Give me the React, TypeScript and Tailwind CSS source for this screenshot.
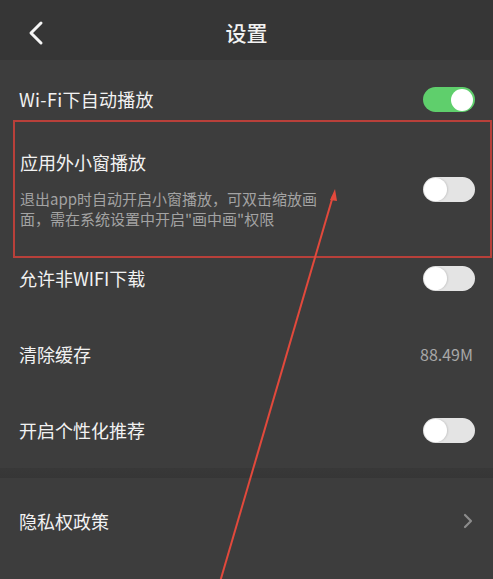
import React from "react";

function Toggle({ on }: { on: boolean }) {
  return on ? (
    <div className="w-[52px] h-[25px] rounded-full bg-[#5fcf6c] flex items-center justify-end pr-[2px]">
      <div className="w-[22px] h-[22px] rounded-full bg-white" />
    </div>
  ) : (
    <div className="w-[52px] h-[25px] rounded-full bg-[#e4e4e4] flex items-center justify-start pl-[1px]">
      <div className="w-[23px] h-[23px] rounded-full bg-white shadow-[1px_0_2px_rgba(0,0,0,0.12)]" />
    </div>
  );
}

export default function App() {
  const font = { fontFamily: '"Noto Sans CJK SC", "Noto Sans", sans-serif' };
  return (
    <div className="relative w-[493px] h-[579px] overflow-hidden bg-[#3d3d3d] text-[#f2f2f2]" style={font}>
      <div className="h-[60px] bg-[#363636] flex items-center relative pt-[5px]">
        <div className="pl-[26px]">
          <svg width="20" height="26" viewBox="0 0 20 26">
            <path d="M15 3 L5 13 L15 23" fill="none" stroke="#f5f5f5" strokeWidth="3" strokeLinecap="round" strokeLinejoin="round" />
          </svg>
        </div>
        <div className="absolute left-0 right-0 text-center text-[21px] font-medium pointer-events-none">设置</div>
      </div>

      <div className="h-[78px] flex items-center justify-between pl-[19px] pr-[18px] pt-[1px]">
        <span className="text-[18px] tracking-[0.3px]">Wi-Fi下自动播放</span>
        <Toggle on />
      </div>

      <div className="h-[102px] flex items-center justify-between pl-[20px] pr-[18px]">
        <div className="flex flex-col">
          <span className="text-[18px] leading-[24px]">应用外小窗播放</span>
          <span className="mt-[15px] text-[15px] leading-[20px] text-[#a3a3a3] w-[306px]">
            退出app时自动开启小窗播放，可双击缩放画面，需在系统设置中开启"画中画"权限
          </span>
        </div>
        <Toggle on={false} />
      </div>

      <div className="h-[76px] flex items-center justify-between pl-[19px] pr-[18px]">
        <span className="text-[18px]">允许非WIFI下载</span>
        <Toggle on={false} />
      </div>

      <div className="h-[76px] flex items-center justify-between pl-[19px] pr-[20px]">
        <span className="text-[18px]">清除缓存</span>
        <span className="text-[16px] text-[#a8a8a8]">88.49M</span>
      </div>

      <div className="h-[76px] flex items-center justify-between pl-[19px] pr-[18px]">
        <span className="text-[18px]">开启个性化推荐</span>
        <Toggle on={false} />
      </div>

      <div className="h-[10px] bg-gradient-to-b from-[#383838] to-[#363636]" />

      <div className="h-[86px] flex items-center justify-between pl-[19px] pr-[20px]">
        <span className="text-[18px]">隐私权政策</span>
        <svg width="10" height="16" viewBox="0 0 10 16">
          <path d="M2 2 L8 8 L2 14" fill="none" stroke="#8c8c8c" strokeWidth="2.2" strokeLinecap="round" strokeLinejoin="round" />
        </svg>
      </div>

      <div className="absolute left-[13px] top-[120px] w-[479px] h-[138px] border-2 border-[#b8403a] pointer-events-none" />

      <svg className="absolute left-0 top-0 pointer-events-none" width="493" height="579" viewBox="0 0 493 579">
        <line x1="220" y1="582" x2="333" y2="196" stroke="#e2493c" strokeWidth="2" />
        <polygon points="335,189 330,200 337,201" fill="#e2493c" />
      </svg>
    </div>
  );
}
